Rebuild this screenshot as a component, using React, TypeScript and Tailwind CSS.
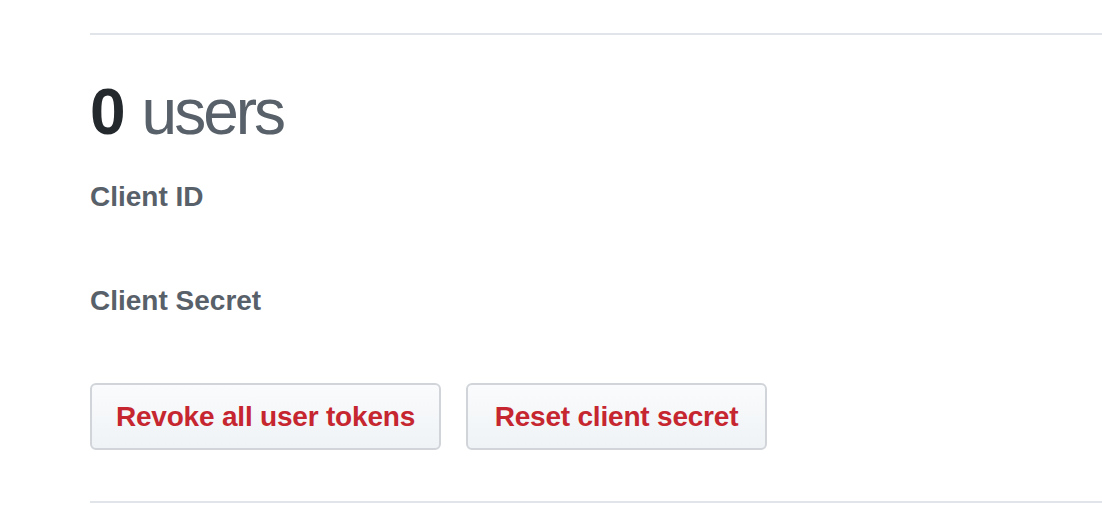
export default function App() {
  return (
    <div className="min-h-[512px] bg-white pl-[90px] font-['Liberation_Sans',Arial,sans-serif]">
      <div className="pt-[33px]">
        <div className="h-[2px] bg-[#e1e4e8]" />
      </div>

      <h2 className="mt-[37px] flex h-[80px] items-baseline gap-[16px] text-[64px] leading-[80px]">
        <span className="font-bold text-[#24292e]">0</span>
        <span className="font-normal tracking-[-3px] text-[#586069]">users</span>
      </h2>

      <dl className="mt-[24px]">
        <dt className="h-[42px] text-[28px] leading-[42px] font-bold text-[#586069]">Client ID</dt>
        <dd className="h-[62px]" />
        <dt className="h-[42px] text-[28px] leading-[42px] font-bold text-[#586069]">Client Secret</dt>
        <dd className="h-[61px]" />
      </dl>

      <div className="flex gap-[25px]">
        <button className="flex h-[67px] w-[351px] items-center justify-center rounded-[6px] border-2 border-[#d1d5da] bg-gradient-to-b from-[#fafbfc] to-[#eff3f6] text-[28px] font-bold tracking-[-0.2px] text-[#c6262f]">
          Revoke all user tokens
        </button>
        <button className="flex h-[67px] w-[301px] items-center justify-center rounded-[6px] border-2 border-[#d1d5da] bg-gradient-to-b from-[#fafbfc] to-[#eff3f6] text-[28px] font-bold tracking-[-0.2px] text-[#c6262f]">
          Reset client secret
        </button>
      </div>

      <div className="mt-[51px] h-[2px] bg-[#e1e4e8]" />
    </div>
  )
}
